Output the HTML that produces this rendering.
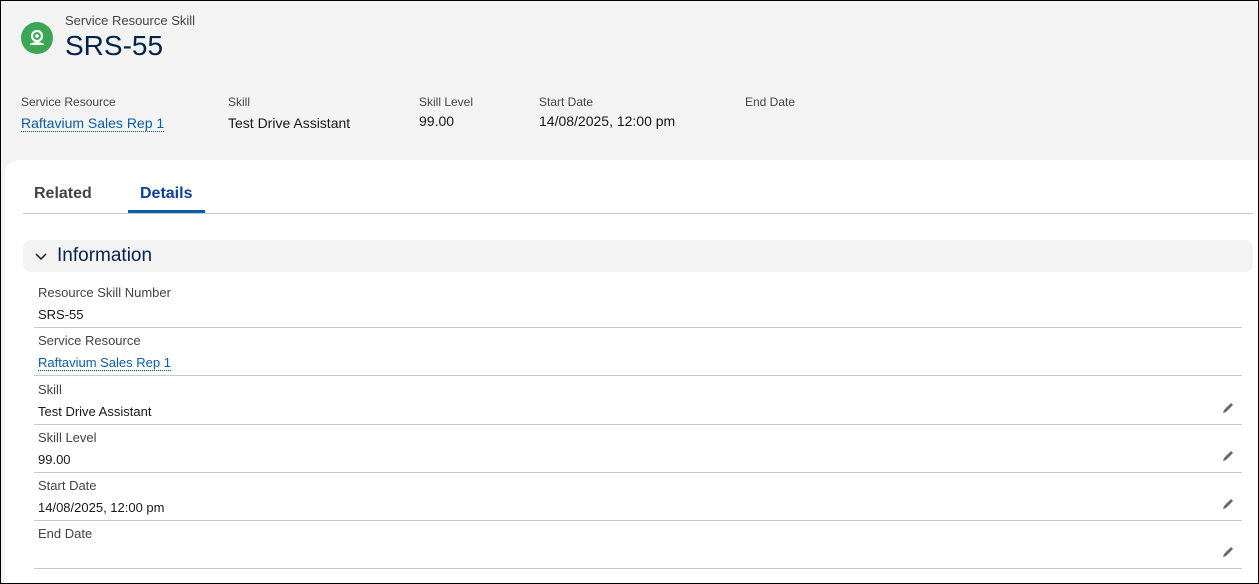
<!DOCTYPE html>
<html><head><style>
*{margin:0;padding:0;box-sizing:border-box}
body{width:1259px;height:584px;overflow:hidden;font-family:"Liberation Sans",Arial,sans-serif;color:#181818;background:#fff}
.frame{position:absolute;left:0;top:0;width:1259px;height:584px;border:1px solid #000;background:#f3f3f3;overflow:hidden}
.abs{position:absolute;white-space:nowrap}
.lbl{font-size:12px;color:#444}
.val{font-size:14px;color:#181818}
a{color:#0b5cab;text-decoration:none;border-bottom:1px dotted #0b5cab}
.card{position:absolute;left:4px;top:159px;width:1260px;height:430px;background:#fff;border-top-left-radius:14px}
.row{position:absolute;left:33px;width:1208px;border-bottom:1px solid #c9c9c9;height:48px}
.row .l{position:absolute;left:4px;top:5px;font-size:13px;color:#444}
.row .v{position:absolute;left:4px;top:27px;font-size:13px;color:#181818}
.pen{position:absolute;right:7px;top:24px}
</style></head><body>
<div class="frame">
<div class="abs" style="left:20px;top:21px;width:32px;height:32px;border-radius:50%;background:#3ba755">
<svg width="32" height="32" viewBox="0 0 32 32"><circle cx="16" cy="14" r="5" fill="none" stroke="#fff" stroke-width="2.2"/><circle cx="16" cy="14" r="1.8" fill="#fff"/><path d="M9 22 Q16 18 23 22 L23 23 L9 23Z" fill="#fff"/></svg></div>
<div class="abs" style="left:64px;top:12px;font-size:13px;color:#444">Service Resource Skill</div>
<div class="abs" style="left:64px;top:29px;font-size:28px;color:#03234d">SRS-55</div>
<div class="abs lbl" style="left:20px;top:94px">Service Resource</div>
<div class="abs val" style="left:20px;top:114px"><a>Raftavium Sales Rep 1</a></div>
<div class="abs lbl" style="left:227px;top:94px">Skill</div>
<div class="abs val" style="left:227px;top:114px">Test Drive Assistant</div>
<div class="abs lbl" style="left:418px;top:94px">Skill Level</div>
<div class="abs val" style="left:418px;top:112px">99.00</div>
<div class="abs lbl" style="left:538px;top:94px">Start Date</div>
<div class="abs val" style="left:538px;top:112px">14/08/2025, 12:00 pm</div>
<div class="abs lbl" style="left:744px;top:94px">End Date</div>
<div class="card"></div>
<div class="abs" style="left:33px;top:184px;font-size:16px;font-weight:bold;color:#444">Related</div>
<div class="abs" style="left:139px;top:184px;font-size:16px;font-weight:bold;color:#0b3f9e">Details</div>
<div class="abs" style="left:127px;top:209px;width:77px;height:3px;background:#0b5cab"></div>
<div class="abs" style="left:22px;top:212px;width:1230px;height:1px;background:#c9c9c9"></div>
<div class="abs" style="left:22px;top:239px;width:1230px;height:32px;background:#f3f3f3;border-radius:8px"></div>
<svg class="abs" style="left:33px;top:251px" width="14" height="10" viewBox="0 0 14 10"><path d="M2 2 L7 7 L12 2" fill="none" stroke="#181818" stroke-width="1.5"/></svg>
<div class="abs" style="left:56px;top:244px;font-size:19px;color:#03234d">Information</div>
<div class="row" style="top:279px"><div class="l">Resource Skill Number</div><div class="v">SRS-55</div></div>
<div class="row" style="top:327px"><div class="l">Service Resource</div><div class="v"><a>Raftavium Sales Rep 1</a></div></div>
<div class="row" style="top:376px"><div class="l">Skill</div><div class="v">Test Drive Assistant</div><svg class="pen" width="14" height="14" viewBox="0 0 14 14"><path d="M2 12 L3 9 L10 2 L12 4 L5 11Z" fill="#666"/></svg></div>
<div class="row" style="top:424px"><div class="l">Skill Level</div><div class="v">99.00</div><svg class="pen" width="14" height="14" viewBox="0 0 14 14"><path d="M2 12 L3 9 L10 2 L12 4 L5 11Z" fill="#666"/></svg></div>
<div class="row" style="top:472px"><div class="l">Start Date</div><div class="v">14/08/2025, 12:00 pm</div><svg class="pen" width="14" height="14" viewBox="0 0 14 14"><path d="M2 12 L3 9 L10 2 L12 4 L5 11Z" fill="#666"/></svg></div>
<div class="row" style="top:520px"><div class="l">End Date</div><div class="v"></div><svg class="pen" width="14" height="14" viewBox="0 0 14 14"><path d="M2 12 L3 9 L10 2 L12 4 L5 11Z" fill="#666"/></svg></div>
</div>
</body></html>
